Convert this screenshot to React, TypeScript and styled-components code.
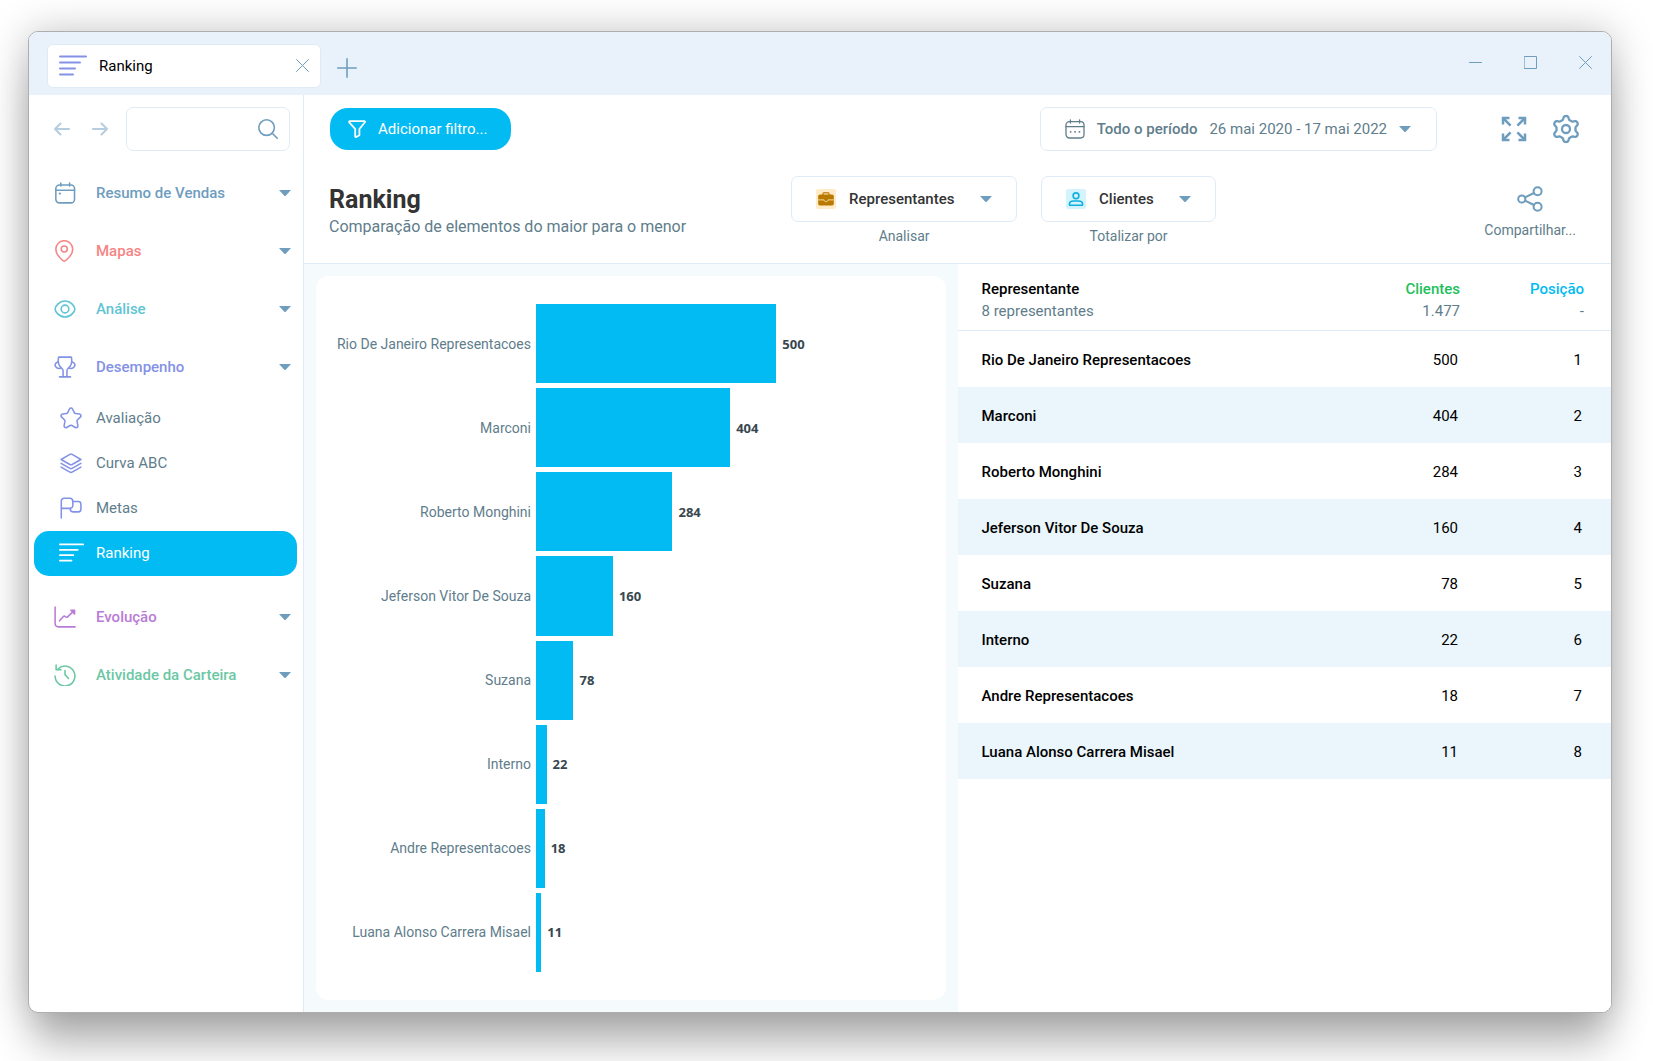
import React, { useId, useState } from "react";
import styled, { createGlobalStyle } from "styled-components";

const font = `Roboto, "Liberation Sans", sans-serif`;

const c = {
  accent: "#03bbf3",
  steel: "#6e9dbe",
  slate: "#607d8b",
  dark: "#333333",
  line: "#deebf7",
  bar: "#e9f2fa",
  canvas: "#f5fafd",
  violet: "#8492e6",
};

const GlobalStyle = createGlobalStyle`
  *, *::before, *::after { box-sizing: border-box; }
  body { margin: 0; background: #ffffff; font-family: ${font}; font-size: 15px; color: #000; }
  button, input, select { font: inherit; color: inherit; }
  button { border: 0; padding: 0; background: none; cursor: pointer; }
  svg { display: block; flex: none; }
`;

const Desktop = styled.div`
  min-height: 100vh;
  padding: 31px 41px 48px 28px;
  display: flex;
`;

const Window = styled.div`
  flex: 1;
  min-width: 0;
  display: flex;
  flex-direction: column;
  border: 1px solid #aeaeae;
  border-radius: 10px;
  overflow: hidden;
  background: #fff;
  box-shadow: 0 2px 40px rgba(0, 0, 0, 0.26), 0 40px 40px -6px rgba(0, 0, 0, 0.24);
`;

const TitleBar = styled.header`
  display: flex;
  align-items: center;
  height: 63px;
  padding: 0 4px 0 18px;
  background: ${c.bar};
  color: ${c.steel};
`;

const Tab = styled.div`
  display: flex;
  align-items: center;
  width: 274px;
  height: 44px;
  margin-top: 4px;
  padding: 0 5px 0 11px;
  gap: 12px;
  border: 1px solid ${c.line};
  border-radius: 6px;
  background: #fff;
`;

const TabName = styled.span`
  flex: 1;
  color: #000;
`;

const IconButton = styled.button<{ $w?: number; $faded?: boolean }>`
  display: grid;
  place-items: center;
  width: ${(p) => p.$w ?? 24}px;
  height: 32px;
  color: ${c.steel};
  opacity: ${(p) => (p.$faded ? 0.5 : 1)};
`;

const AddTab = styled(IconButton)`
  margin: 8px auto 0 10px;
`;

const WindowControls = styled.div`
  display: flex;
  gap: 11px;
  margin-bottom: 2px;
`;

const Body = styled.div`
  flex: 1;
  display: flex;
  min-height: 0;
`;

const Sidebar = styled.aside`
  flex: none;
  width: 275px;
  padding-top: 12px;
  border-right: 1px solid ${c.line};
`;

const SidebarTools = styled.div`
  display: flex;
  align-items: center;
  gap: 14px;
  padding: 0 13px 0 21px;
  margin-bottom: 13px;
`;

const SearchBox = styled.label`
  flex: 1;
  min-width: 0;
  display: flex;
  align-items: center;
  height: 44px;
  padding: 0 11px;
  border: 1px solid ${c.line};
  border-radius: 7px;
  color: ${c.steel};
`;

const SearchInput = styled.input`
  flex: 1;
  min-width: 0;
  border: 0;
  outline: 0;
  background: none;
`;

const GroupButton = styled.button<{ $color: string }>`
  display: flex;
  align-items: center;
  width: 100%;
  height: 58px;
  padding: 0 12px 0 25px;
  color: ${(p) => p.$color};
  font-weight: 500;
  text-align: left;
`;

const GroupName = styled.span`
  flex: 1;
  margin-left: 20px;
`;

const SubList = styled.ul`
  list-style: none;
  margin: 0 0 12px;
  padding: 0 6px 0 5px;
`;

const SubLink = styled.a<{ $active?: boolean }>`
  display: flex;
  align-items: center;
  gap: 12px;
  height: 45px;
  padding: 0 0 2px 24px;
  border-radius: 15px;
  text-decoration: none;
  color: ${(p) => (p.$active ? "#fff" : c.slate)};
  background: ${(p) => (p.$active ? c.accent : "transparent")};
`;

const SubIcon = styled.span<{ $active?: boolean }>`
  display: grid;
  place-items: center;
  width: 26px;
  color: ${(p) => (p.$active ? "#fff" : c.violet)};
`;

const Main = styled.main`
  flex: 1;
  min-width: 0;
  display: flex;
  flex-direction: column;
`;

const PageHeader = styled.div`
  padding: 12px 29px 17px 25px;
  border-bottom: 1px solid ${c.line};
`;

const Toolbar = styled.div`
  display: flex;
  align-items: center;
  height: 44px;
  margin-bottom: 25px;
`;

const FilterButton = styled.button`
  display: flex;
  align-items: center;
  gap: 12px;
  height: 42px;
  margin: 0 auto 0 1px;
  padding: 0 24px 0 18px;
  border-radius: 18px;
  background: ${c.accent};
  color: #fff;
`;

const PeriodButton = styled.button`
  display: flex;
  align-items: center;
  height: 44px;
  margin-right: 61px;
  padding: 0 25px 0 24px;
  gap: 12px;
  border: 1px solid ${c.line};
  border-radius: 7px;
  color: ${c.slate};
`;

const PeriodName = styled.span`
  font-weight: 500;
`;

const ToolPair = styled.div`
  display: flex;
  gap: 20px;
`;

const TitleRow = styled.div`
  display: flex;
  align-items: flex-start;
  padding-right: 6px;
`;

const Title = styled.h1`
  margin: 10px 0 0;
  font-size: 25px;
  line-height: 28px;
  font-weight: 700;
  color: ${c.dark};
`;

const Subtitle = styled.p`
  margin: 0;
  font-size: 16px;
  line-height: 26px;
  color: ${c.slate};
`;

const Pickers = styled.div`
  display: flex;
  gap: 24px;
  margin: 0 auto 0 105px;
`;

const Picker = styled.div`
  display: flex;
  flex-direction: column;
  align-items: center;
  gap: 4px;
`;

const PickerBox = styled.div`
  display: flex;
  align-items: center;
  height: 46px;
  padding: 0 24px;
  border: 1px solid ${c.line};
  border-radius: 7px;
  color: ${c.steel};
`;

const PickerSelect = styled.select`
  appearance: none;
  border: 0;
  outline: 0;
  padding: 0;
  margin: 0 25px 0 13px;
  background: none;
  font-weight: 500;
  color: ${c.dark};
`;

const Caption = styled.label`
  font-size: 14px;
  line-height: 20px;
  color: ${c.slate};
`;

const ShareButton = styled.button`
  display: flex;
  flex-direction: column;
  align-items: center;
  gap: 8px;
  padding-top: 10px;
  font-size: 14px;
  line-height: 20px;
  color: ${c.slate};
  & > svg {
    color: ${c.steel};
  }
`;

const Content = styled.div`
  flex: 1;
  display: grid;
  grid-template-columns: 1fr 1fr;
  background: ${c.canvas};
`;

const ChartPane = styled.section`
  display: flex;
  padding: 12px;
`;

const ChartCard = styled.div`
  flex: 1;
  display: flex;
  flex-direction: column;
  gap: 5px;
  padding: 28px 25px 28px 20px;
  border-radius: 13px;
  background: #fff;
`;

const ChartRow = styled.div`
  flex: 1;
  display: grid;
  grid-template-columns: 195px 1fr;
  gap: 5px;
`;

const ChartLabel = styled.span`
  align-self: center;
  font-size: 14px;
  line-height: 20px;
  text-align: right;
  white-space: nowrap;
  color: ${c.slate};
`;

const Plot = styled.div`
  display: flex;
  align-items: center;
  gap: 6px;
`;

const Bar = styled.div`
  height: 100%;
  background: ${c.accent};
`;

const BarValue = styled.span`
  font-family: "Noto Sans", ${font};
  font-size: 13px;
  line-height: 20px;
  font-weight: 700;
  color: #37474f;
`;

const TablePane = styled.section`
  background: #fff;
`;

const Table = styled.table`
  width: 100%;
  border-collapse: separate;
  border-spacing: 0;
`;

const HeadCell = styled.th<{ $color?: string; $width?: number }>`
  width: ${(p) => (p.$width ? `${p.$width}px` : "auto")};
  padding: 14px 27px 8px 0;
  border-bottom: 1px solid ${c.line};
  font-weight: 500;
  line-height: 22px;
  text-align: right;
  color: ${(p) => p.$color ?? "#000"};
  &:first-child {
    padding-left: 24px;
    text-align: left;
  }
`;

const HeadTotal = styled.div`
  font-weight: 400;
  color: ${c.slate};
`;

const BodyRow = styled.tr`
  height: 56px;
  &:nth-child(even) {
    background: #eaf6fb;
  }
`;

const NameCell = styled.th`
  padding: 2px 0 0 24px;
  font-weight: 500;
  text-align: left;
`;

const NumberCell = styled.td`
  padding: 2px 29px 0 0;
  text-align: right;
`;

type IconProps = {
  w?: number;
  h?: number;
  box?: string;
  stroke?: number;
  color?: string;
  children: React.ReactNode;
};

const Icon = ({ w = 22, h, box = "0 0 24 24", stroke = 1.7, color, children }: IconProps) => (
  <svg
    width={w}
    height={h ?? w}
    viewBox={box}
    fill="none"
    stroke={color ?? "currentColor"}
    strokeWidth={stroke}
    strokeLinecap="round"
    strokeLinejoin="round"
    aria-hidden="true"
  >
    {children}
  </svg>
);

const Caret = () => (
  <svg width="12" height="6" viewBox="0 0 12 6" aria-hidden="true">
    <path d="M0 0h12L6.700 5.700a1 1 0 0 1-1.400 0z" fill={c.steel} />
  </svg>
);

const RankingIcon = ({ w = 28, h = 21, color }: { w?: number; h?: number; color?: string }) => (
  <Icon w={w} h={h} box="0 0 28 21" stroke={2} color={color}>
    <path d="M1 1.5h26M1 7.5h20M1 13.5h15M1 19.5h13" />
  </Icon>
);

const CalendarIcon = () => (
  <Icon>
    <rect x="2" y="3.2" width="20.4" height="19.6" rx="4" />
    <path d="M2 9h20.4M7.4 1.2v3.2M17 1.2v3.2" />
    <path d="M6.3 12.6h.1" strokeWidth="2.4" />
  </Icon>
);

const PinIcon = () => (
  <Icon>
    <path d="M20.4 10c0 5.600-4.600 9.800-7.200 12.100a3 3 0 0 1-4 0C6.600 19.800 2 15.600 2 10a9.200 9.200 0 0 1 18.400 0Z" />
    <circle cx="11.2" cy="9.8" r="3.3" />
  </Icon>
);

const EyeIcon = () => (
  <Icon>
    <path d="M1.200 12C1.200 9.500 5.400 3.300 12 3.300S22.800 9.500 22.800 12 18.600 20.700 12 20.700 1.200 14.500 1.200 12Z" />
    <circle cx="12" cy="12" r="4.2" />
  </Icon>
);

const TrophyIcon = () => (
  <Icon>
    <path d="M5.200 1.200h13.600l.4 1.300c.9 5-1 8.600-3.700 10.900-1 .9-1.400 1.800-1.400 3v6.200M5.200 1.200l-.4 1.300c-.9 5 1 8.600 3.700 10.900 1 .9 1.400 1.800 1.400 3v6.200" />
    <path d="M6 22.800h12M4.700 6.200C3 6.800 1.200 8 1.200 9.800c0 2.300 2.700 4 4.600 3.900.8 0 1.500-.4 2-.9M19.300 6.200c1.700.6 3.500 1.800 3.500 3.600 0 2.300-2.700 4-4.600 3.900-.8 0-1.500-.4-2-.9" />
  </Icon>
);

const StarIcon = () => (
  <Icon>
    <path d="M10.300 2.200c.7-1.400 2.700-1.400 3.400 0l1.900 3.900c.3.600.8 1 1.500 1.100l4.100.5c1.600.3 2.200 2.200 1 3.300l-3 2.900c-.5.500-.7 1.200-.6 1.800l.9 4.600c.3 1.600-1.300 2.700-2.700 2l-3.900-2.100c-.6-.3-1.200-.3-1.800 0l-3.900 2.100c-1.400.7-3-.4-2.700-2l.9-4.600c.1-.6-.1-1.300-.6-1.800l-3-2.900c-1.200-1.100-.6-3 1-3.300l4.100-.5c.7-.1 1.200-.5 1.500-1.100Z" />
  </Icon>
);

const LayersIcon = () => (
  <Icon>
    <path d="m1.200 8.200 9.600-5.600a2.400 2.400 0 0 1 2.400 0l9.600 5.600-9.600 5.400a2.400 2.400 0 0 1-2.400 0ZM1.200 12.400l9.600 5.400a2.400 2.400 0 0 0 2.400 0l9.600-5.400M1.200 16.500l9.600 5.400a2.400 2.400 0 0 0 2.400 0l9.600-5.400" />
  </Icon>
);

const FlagIcon = () => (
  <Icon>
    <path d="M1.400 23V4.400a3 3 0 0 1 3-3h6.600a3 3 0 0 1 3 3v5a3 3 0 0 1-3 3H1.400" />
    <path d="M14 5h6a2.800 2.800 0 0 1 2.800 2.800v5.600a2.800 2.800 0 0 1-2.800 2.800h-6a2.800 2.800 0 0 1-2.700-2.800v-1" />
  </Icon>
);

const TrendIcon = () => (
  <Icon>
    <path d="M1.200 1v18.400a3.400 3.400 0 0 0 3.400 3.400H23" />
    <path d="m6 16.200 4-4.400c.7-.8 1.700-.8 2.500-.1.900.8 1.900.6 2.600-.1l6.300-6" />
    <path d="M18.400 4.600h4v4.200l-2-2.200Z" fill="currentColor" />
  </Icon>
);

const HistoryIcon = () => (
  <Icon>
    <path d="M4.400 5.400A10.800 10.800 0 1 1 1.200 13M2.300 1v5.200h5.400M12 7.200v4.400l3.800 4.200" />
  </Icon>
);

/* Outline of a six-toothed cog, first tooth pointing up. */
const cogOutline = (cx: number, cy: number) => {
  const steps = 120;
  const points = Array.from({ length: steps }, (_, i) => {
    const t = (i / steps) * Math.PI * 2;
    const r = 11.3 + 1.9 * Math.tanh(1.8 * Math.cos(6 * t) - 0.3);
    return `${(cx + r * Math.sin(t)).toFixed(2)} ${(cy - r * Math.cos(t)).toFixed(2)}`;
  });
  return `M${points.join("L")}Z`;
};

const GearIcon = () => (
  <Icon w={30} box="0 0 30 30" stroke={2.3}>
    <circle cx="15" cy="15" r="4" />
    <path d={cogOutline(15, 15)} />
  </Icon>
);

const ExpandIcon = () => (
  <Icon w={26} box="0 0 26 26" stroke={2.5}>
    <g strokeLinecap="butt" strokeLinejoin="miter">
      <path d="m2 2 7.600 7.600M24 2l-7.600 7.600M2 24l7.600-7.600M24 24l-7.600-7.600" />
      <path d="M2 8.500V2h6.500M17.500 2H24v6.500M24 17.500V24h-6.500M8.500 24H2v-6.500" />
    </g>
  </Icon>
);

const ShareIcon = () => (
  <Icon w={26} box="0 0 26 26" stroke={2}>
    <circle cx="4.800" cy="13" r="3.600" />
    <circle cx="20.600" cy="5.200" r="4" />
    <circle cx="20.600" cy="20.800" r="4" />
    <path d="m8 11.400 9-4.400M8 14.600l9 4.400" />
  </Icon>
);

const FunnelIcon = () => (
  <Icon w={18} box="0 0 18 18" stroke={1.8}>
    <path d="M1.800 1.200h14.600c.6 0 .8.700.5 1.100L11.400 9v6.200L8.200 17c-.5.300-1-.1-1-.6V9L1.300 2.300c-.4-.4-.1-1.100.5-1.100Z" />
  </Icon>
);

const PeriodIcon = () => (
  <Icon w={20} box="0 0 20 20" stroke={1.3}>
    <rect x="1" y="2.600" width="18" height="16.400" rx="3.400" />
    <path d="M1 7.600h18M5.400 1v3M14.600 1v3" />
    <path d="M5.600 12.800h.1M10 12.800h.1M14.400 12.800h.1" strokeWidth="1.8" />
  </Icon>
);

const BriefcaseIcon = () => (
  <svg width="20" height="20" viewBox="0 0 20 20" aria-hidden="true">
    <rect width="20" height="20" rx="2" fill="#ffebc8" />
    <path d="M7 6V4.800C7 4.100 7.500 3.700 8.100 3.700h3.800c.6 0 1.100.4 1.100 1.100V6" fill="none" stroke="#c88a22" strokeWidth="1.5" />
    <rect x="2.200" y="5.600" width="15.600" height="10.800" rx="1.600" fill="#b97900" />
    <path d="M2.200 10.900h5.900c0 1 .8 1.800 1.900 1.800s1.900-.8 1.900-1.800h5.900" fill="none" stroke="#ffe0a6" strokeWidth=".9" />
  </svg>
);

const PersonIcon = () => (
  <svg width="20" height="20" viewBox="0 0 20 20" aria-hidden="true">
    <rect width="20" height="20" rx="2" fill="#d3f3fd" />
    <g fill="none" stroke="#0fb0e0" strokeWidth="1.6">
      <circle cx="10" cy="6.800" r="2.900" />
      <path d="M3.500 16.200v-1.400c0-1.900 2.200-2.800 4-2.800h5c1.800 0 4 .9 4 2.800v1.400Z" strokeLinejoin="round" />
    </g>
  </svg>
);

type NavItem = { name: string; icon: React.ReactNode; active?: boolean };
type NavGroupData = { name: string; color: string; icon: React.ReactNode; items?: NavItem[] };

const groups: NavGroupData[] = [
  { name: "Resumo de Vendas", color: c.steel, icon: <CalendarIcon /> },
  { name: "Mapas", color: "#f58585", icon: <PinIcon /> },
  { name: "Análise", color: "#5fc4d3", icon: <EyeIcon /> },
  {
    name: "Desempenho",
    color: c.violet,
    icon: <TrophyIcon />,
    items: [
      { name: "Avaliação", icon: <StarIcon /> },
      { name: "Curva ABC", icon: <LayersIcon /> },
      { name: "Metas", icon: <FlagIcon /> },
      { name: "Ranking", icon: <RankingIcon w={25} h={19} />, active: true },
    ],
  },
  { name: "Evolução", color: "#b97bd6", icon: <TrendIcon /> },
  { name: "Atividade da Carteira", color: "#6cc7a4", icon: <HistoryIcon /> },
];

const ranking = [
  { name: "Rio De Janeiro Representacoes", clients: 500 },
  { name: "Marconi", clients: 404 },
  { name: "Roberto Monghini", clients: 284 },
  { name: "Jeferson Vitor De Souza", clients: 160 },
  { name: "Suzana", clients: 78 },
  { name: "Interno", clients: 22 },
  { name: "Andre Representacoes", clients: 18 },
  { name: "Luana Alonso Carrera Misael", clients: 11 },
];

const axisMax = 800;
const total = ranking.reduce((sum, r) => sum + r.clients, 0);

function NavGroup({ group }: { group: NavGroupData }) {
  const [open, setOpen] = useState(Boolean(group.items));
  return (
    <>
      <GroupButton $color={group.color} aria-expanded={open} onClick={() => setOpen(!open)}>
        {group.icon}
        <GroupName>{group.name}</GroupName>
        <Caret />
      </GroupButton>
      {open && group.items && (
        <SubList>
          {group.items.map((item) => (
            <li key={item.name}>
              <SubLink href="#" $active={item.active} aria-current={item.active ? "page" : undefined}>
                <SubIcon $active={item.active}>{item.icon}</SubIcon>
                {item.name}
              </SubLink>
            </li>
          ))}
        </SubList>
      )}
    </>
  );
}

function OptionPicker({ caption, icon, options }: { caption: string; icon: React.ReactNode; options: string[] }) {
  const id = useId();
  return (
    <Picker>
      <PickerBox>
        {icon}
        <PickerSelect id={id} defaultValue={options[0]}>
          {options.map((o) => (
            <option key={o}>{o}</option>
          ))}
        </PickerSelect>
        <Caret />
      </PickerBox>
      <Caption htmlFor={id}>{caption}</Caption>
    </Picker>
  );
}

export default function App() {
  return (
    <>
      <GlobalStyle />
      <Desktop>
        <Window>
          <TitleBar>
            <Tab>
              <RankingIcon color={c.violet} />
              <TabName>Ranking</TabName>
              <IconButton aria-label="Fechar aba" $w={26}>
                <Icon w={13} box="0 0 13 13" stroke={1}>
                  <path d="M.5.5l12 12M12.500.5l-12 12" />
                </Icon>
              </IconButton>
            </Tab>
            <AddTab aria-label="Nova aba" $w={32}>
              <Icon w={20} box="0 0 20 20" stroke={1.6}>
                <path d="M10 .8v18.400M.8 10h18.400" />
              </Icon>
            </AddTab>
            <WindowControls>
              <IconButton aria-label="Minimizar" $w={44}>
                <Icon w={13} box="0 0 13 13" stroke={1}>
                  <path d="M.5 6.500h12" />
                </Icon>
              </IconButton>
              <IconButton aria-label="Maximizar" $w={44}>
                <Icon w={13} box="0 0 13 13" stroke={1}>
                  <path d="M.5.500h12v12H.5Z" />
                </Icon>
              </IconButton>
              <IconButton aria-label="Fechar" $w={44}>
                <Icon w={13} box="0 0 13 13" stroke={1}>
                  <path d="M.5.500l12 12M12.500.5l-12 12" />
                </Icon>
              </IconButton>
            </WindowControls>
          </TitleBar>

          <Body>
            <Sidebar>
              <SidebarTools>
                <IconButton aria-label="Voltar" $faded>
                  <Icon w={16} box="0 0 16 14" stroke={2}>
                    <path d="M15 7H1M6.500 1.500 1 7l5.500 5.500" />
                  </Icon>
                </IconButton>
                <IconButton aria-label="Avançar" $faded>
                  <Icon w={16} box="0 0 16 14" stroke={2}>
                    <path d="M1 7h14M9.500 1.500 15 7l-5.500 5.500" />
                  </Icon>
                </IconButton>
                <SearchBox>
                  <SearchInput type="search" aria-label="Buscar" />
                  <Icon w={20} box="0 0 20 20" stroke={1.6}>
                    <circle cx="8.600" cy="8.600" r="7.800" />
                    <path d="m14.200 14.200 5 5" />
                  </Icon>
                </SearchBox>
              </SidebarTools>
              <nav>
                {groups.map((g) => (
                  <NavGroup key={g.name} group={g} />
                ))}
              </nav>
            </Sidebar>

            <Main>
              <PageHeader>
                <Toolbar>
                  <FilterButton>
                    <FunnelIcon />
                    Adicionar filtro...
                  </FilterButton>
                  <PeriodButton>
                    <PeriodIcon />
                    <PeriodName>Todo o período</PeriodName>
                    <span>26 mai 2020 - 17 mai 2022</span>
                    <Caret />
                  </PeriodButton>
                  <ToolPair>
                    <IconButton aria-label="Tela cheia" $w={32}>
                      <ExpandIcon />
                    </IconButton>
                    <IconButton aria-label="Configurações" $w={32}>
                      <GearIcon />
                    </IconButton>
                  </ToolPair>
                </Toolbar>
                <TitleRow>
                  <div>
                    <Title>Ranking</Title>
                    <Subtitle>Comparação de elementos do maior para o menor</Subtitle>
                  </div>
                  <Pickers>
                    <OptionPicker
                      caption="Analisar"
                      icon={<BriefcaseIcon />}
                      options={["Representantes", "Produtos", "Regiões"]}
                    />
                    <OptionPicker caption="Totalizar por" icon={<PersonIcon />} options={["Clientes", "Valor"]} />
                  </Pickers>
                  <ShareButton>
                    <ShareIcon />
                    Compartilhar...
                  </ShareButton>
                </TitleRow>
              </PageHeader>

              <Content>
                <ChartPane>
                  <ChartCard>
                    {ranking.map((r) => (
                      <ChartRow key={r.name}>
                        <ChartLabel>{r.name}</ChartLabel>
                        <Plot>
                          <Bar style={{ width: `${(r.clients / axisMax) * 100}%` }} />
                          <BarValue>{r.clients}</BarValue>
                        </Plot>
                      </ChartRow>
                    ))}
                  </ChartCard>
                </ChartPane>
                <TablePane>
                  <Table>
                    <thead>
                      <tr>
                        <HeadCell scope="col">
                          Representante
                          <HeadTotal>{ranking.length} representantes</HeadTotal>
                        </HeadCell>
                        <HeadCell scope="col" $color="#22c05c" $width={130}>
                          Clientes
                          <HeadTotal>{total.toLocaleString("de-DE")}</HeadTotal>
                        </HeadCell>
                        <HeadCell scope="col" $color={c.accent} $width={124}>
                          Posição
                          <HeadTotal>-</HeadTotal>
                        </HeadCell>
                      </tr>
                    </thead>
                    <tbody>
                      {ranking.map((r, i) => (
                        <BodyRow key={r.name}>
                          <NameCell scope="row">{r.name}</NameCell>
                          <NumberCell>{r.clients}</NumberCell>
                          <NumberCell>{i + 1}</NumberCell>
                        </BodyRow>
                      ))}
                    </tbody>
                  </Table>
                </TablePane>
              </Content>
            </Main>
          </Body>
        </Window>
      </Desktop>
    </>
  );
}
